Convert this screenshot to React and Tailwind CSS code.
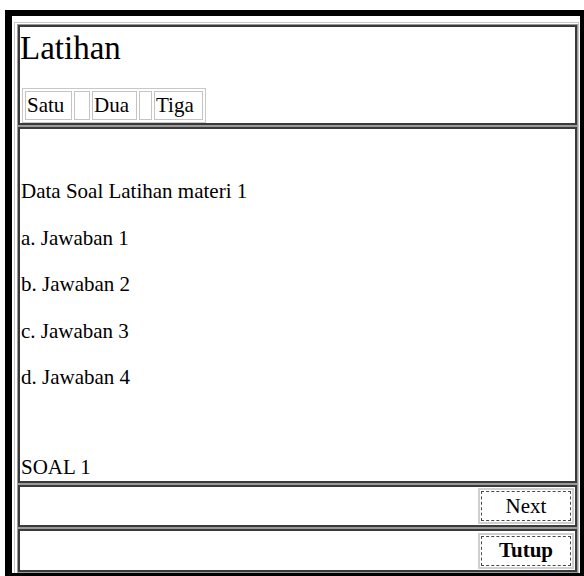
import React from "react";

const serif = { fontFamily: '"Liberation Serif", "Times New Roman", serif' };

// One table cell: thin grey rim around a dark 2px frame
function Cell({ className = "", children }) {
  return (
    <div className={"border border-[#9a9a9a] " + className}>
      <div className="h-full border-2 border-[#3a3a3a] bg-white">{children}</div>
    </div>
  );
}

function Tab({ w, children }) {
  return (
    <div className={"h-[29px] border border-[#c4c4c4] pl-[1px] flex items-center leading-[25px] " + w}>
      {children}
    </div>
  );
}

function Button({ bold, children }) {
  return (
    <button
      type="button"
      className="w-[96px] h-[36px] border-2 border-[#cfcfcf] bg-white p-[1px] text-black"
    >
      <span
        className={
          "flex h-full w-full items-center justify-center border border-dashed border-[#4a4a4a] text-[21px] leading-[25px] " +
          (bold ? "font-bold" : "")
        }
      >
        {children}
      </span>
    </button>
  );
}

export default function App() {
  const lines = ["a. Jawaban 1", "b. Jawaban 2", "c. Jawaban 3", "d. Jawaban 4"];
  return (
    <div className="w-[584px] h-[576px] bg-white overflow-hidden text-black" style={serif}>
      <div className="ml-[5px] mt-[10px] w-[579px] h-[566px] border-l-[7px] border-t-[6px] border-r-[4px] border-b-[3px] border-black pl-[2px] pr-[1px] pt-[6px]">
        <div className="h-[551px] border-t border-l border-r border-[#c8c8c8] pt-[1px] pl-[2px] flex flex-col">
          {/* header */}
          <Cell className="h-[102px]">
            <div className="text-[33px] leading-[43px]">Latihan</div>
            <div className="ml-[2px] mt-[18px] w-fit border border-[#c8c8c8] p-[2px] flex gap-[2px] text-[21px]">
              <Tab w="w-[47px]">Satu</Tab>
              <Tab w="w-[16px]" />
              <Tab w="w-[45px]">Dua</Tab>
              <Tab w="w-[13px]" />
              <Tab w="w-[49px]">Tiga</Tab>
            </div>
          </Cell>

          {/* question body */}
          <Cell className="h-[358px]">
            <div className="pl-[1px] pt-[50px] text-[21px] leading-[25px]">
              <div>Data Soal Latihan materi 1</div>
              {lines.map((t) => (
                <div key={t} className="mt-[21.5px]">
                  {t}
                </div>
              ))}
              <div className="mt-[65px]">SOAL 1</div>
            </div>
          </Cell>

          {/* next */}
          <Cell className="h-[44px]">
            <div className="h-full flex items-center justify-end pr-[1px]">
              <Button>Next</Button>
            </div>
          </Cell>

          {/* close */}
          <Cell className="h-[45px]">
            <div className="h-full flex items-center justify-end pr-[1px]">
              <Button bold>Tutup</Button>
            </div>
          </Cell>
        </div>
      </div>
    </div>
  );
}
